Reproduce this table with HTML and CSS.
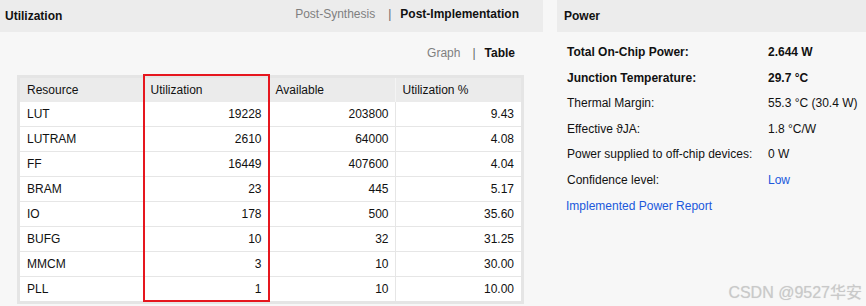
FILE: index.html
```html
<!DOCTYPE html>
<html lang="en">
<head>
<meta charset="utf-8">
<title>Utilization &amp; Power</title>
<link rel="stylesheet" href="styles.css">
</head>
<body>
<div class="page">
  <section class="panel util">
    <header class="panel-head">
      <span class="panel-title">Utilization</span>
      <nav class="tabs">
        <span class="tab">Post-Synthesis</span><span class="sep sep-tab">|</span><span class="tab active">Post-Implementation</span>
      </nav>
    </header>
    <div class="util-body">
      <div class="view-switch">
        <span class="tab">Graph</span><span class="sep sep-view">|</span><span class="tab active">Table</span>
      </div>
      <div class="table-wrap">
        <table class="util-table">
          <colgroup>
            <col class="c1"><col class="c2"><col class="c3"><col class="c4">
          </colgroup>
          <thead>
            <tr><th>Resource</th><th>Utilization</th><th>Available</th><th>Utilization %</th></tr>
          </thead>
          <tbody>
            <tr><td>LUT</td><td class="num">19228</td><td class="num">203800</td><td class="num">9.43</td></tr>
            <tr><td>LUTRAM</td><td class="num">2610</td><td class="num">64000</td><td class="num">4.08</td></tr>
            <tr><td>FF</td><td class="num">16449</td><td class="num">407600</td><td class="num">4.04</td></tr>
            <tr><td>BRAM</td><td class="num">23</td><td class="num">445</td><td class="num">5.17</td></tr>
            <tr><td>IO</td><td class="num">178</td><td class="num">500</td><td class="num">35.60</td></tr>
            <tr><td>BUFG</td><td class="num">10</td><td class="num">32</td><td class="num">31.25</td></tr>
            <tr><td>MMCM</td><td class="num">3</td><td class="num">10</td><td class="num">30.00</td></tr>
            <tr><td>PLL</td><td class="num">1</td><td class="num">10</td><td class="num">10.00</td></tr>
          </tbody>
        </table>
        <div class="highlight"></div>
      </div>
    </div>
  </section>
  <section class="panel power">
    <header class="panel-head">
      <span class="panel-title">Power</span>
    </header>
    <div class="power-body">
      <div class="prow strong"><span class="plabel">Total On-Chip Power:</span><span class="pval">2.644 W</span></div>
      <div class="prow strong"><span class="plabel">Junction Temperature:</span><span class="pval">29.7 °C</span></div>
      <div class="prow"><span class="plabel">Thermal Margin:</span><span class="pval">55.3 °C (30.4 W)</span></div>
      <div class="prow"><span class="plabel">Effective ϑJA:</span><span class="pval">1.8 °C/W</span></div>
      <div class="prow"><span class="plabel">Power supplied to off-chip devices:</span><span class="pval">0 W</span></div>
      <div class="prow"><span class="plabel">Confidence level:</span><span class="pval link">Low</span></div>
      <div class="prow"><span class="link">Implemented Power Report</span></div>
    </div>
  </section>
</div>
<div class="watermark">CSDN @9527华安</div>
</body>
</html>
```
FILE: styles.css
```css
* { box-sizing: border-box; }
html, body {
  margin: 0;
  padding: 0;
  background: #f7f7f7;
}
body {
  width: 866px;
  height: 306px;
  overflow: hidden;
  font-family: "Liberation Sans", Arial, sans-serif;
  font-size: 12px;
  color: #111;
  position: relative;
}
.page {
  display: flex;
  gap: 14px;
  height: 306px;
}
.panel { display: flex; flex-direction: column; }
.util { width: 543px; }
.power { flex: 1; }

.panel-head {
  height: 32px;
  background: #ececec;
  display: flex;
  align-items: center;
  justify-content: space-between;
}
.util .panel-head { padding: 0 24px 0 5px; }
.power .panel-head { padding: 0 7px; }
.panel-title {
  font-weight: bold;
  color: #111;
  line-height: 14px;
}
.tabs {
  display: flex;
  align-items: center;
  line-height: 14px;
  margin-bottom: 4px;
}
.tab { color: #7f7f7f; }
.tab.active { color: #111; font-weight: bold; }
.sep { color: #666; }
.sep-tab { margin: 0 9px 0 13px; }
.sep-view { margin: 0 9px 0 12px; }

.util-body {
  padding: 0 0 0 17px;
}
.view-switch {
  display: flex;
  justify-content: flex-end;
  padding-right: 28px;
  margin-top: 11px;
  line-height: 20px;
  height: 20px;
}
.table-wrap {
  position: relative;
  margin-top: 12px;
  width: 507px;
  padding: 3px;
  background: #e5e5e5;
}
.util-table {
  width: 501px;
  border-collapse: collapse;
  table-layout: fixed;
  background: #fff;
}
.c1 { width: 123px; }
.c2 { width: 125px; }
.c3 { width: 127px; }
.c4 { width: 126px; }
.util-table th,
.util-table td {
  padding: 0 7px;
  height: 24px;
  line-height: 14px;
  font-weight: normal;
  text-align: left;
  white-space: nowrap;
  color: #111;
}
.util-table th {
  background: #ebebeb;
  border-left: 1px solid #f4f4f4;
}
.util-table th:first-child { border-left: none; }
.util-table td { border-left: 1px solid #e6e6e6; }
.util-table td:first-child { border-left: none; }
.util-table tbody tr + tr td { border-top: 1px solid #e6e6e6; height: 25px; }
.util-table td.num { text-align: right; padding-right: 6px; }
.util-table td.num:last-child { padding-right: 7px; }

.highlight {
  position: absolute;
  left: 126px;
  top: -1px;
  width: 127px;
  height: 228px;
  border: 2px solid #e6161e;
  pointer-events: none;
}

.power-body {
  padding: 8px 0 0 10px;
}
.prow {
  display: flex;
  height: 25.6px;
  line-height: 25.6px;
}
.plabel { width: 201px; flex: none; }
.prow.strong { font-weight: bold; }
.link { color: #2058dc; }
.prow .link:only-child { margin-left: -1px; }

.watermark {
  position: absolute;
  right: 4px;
  bottom: 3px;
  font-family: "Liberation Sans", "Noto Sans CJK SC", sans-serif;
  font-size: 16px;
  color: #c9c9c9;
  text-shadow: 0 0 1px #dcdcdc;
  line-height: 20px;
}
```
